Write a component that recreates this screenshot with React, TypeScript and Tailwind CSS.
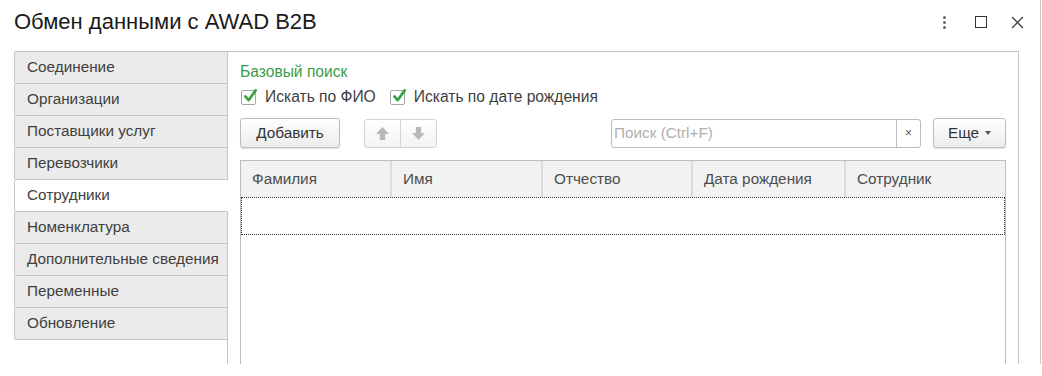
import React from "react";

const tabs = [
  "Соединение",
  "Организации",
  "Поставщики услуг",
  "Перевозчики",
  "Сотрудники",
  "Номенклатура",
  "Дополнительные сведения",
  "Переменные",
  "Обновление",
];

const columns = [
  { title: "Фамилия", w: "w-[151px]" },
  { title: "Имя", w: "w-[151px]" },
  { title: "Отчество", w: "w-[150px]" },
  { title: "Дата рождения", w: "w-[153px]" },
  { title: "Сотрудник", w: "flex-1" },
];

function Check({ label }: { label: string }) {
  return (
    <label className="flex items-center h-[20px]">
      <span className="relative w-[15px] h-[15px] border border-[#a6a6a6] rounded-[2px] bg-white">
        <svg viewBox="0 0 16 16" className="absolute left-[1px] -top-[3px] w-[15px] h-[16px]">
          <path d="M2.5 8.5 L6 12.5 L13.5 2" fill="none" stroke="#35a23f" strokeWidth="2.8" strokeLinecap="round" strokeLinejoin="round" />
        </svg>
      </span>
      <span className="ml-[9px] text-[15.6px] text-[#404040]">{label}</span>
    </label>
  );
}

function Arrow({ down }: { down?: boolean }) {
  return (
    <svg viewBox="0 0 14 14" className={"w-[15px] h-[15px] " + (down ? "rotate-180" : "")}>
      <path d="M7 1 L13 7.5 L9.5 7.5 L9.5 13 L4.5 13 L4.5 7.5 L1 7.5 Z" fill="#b8b8b8" />
    </svg>
  );
}

export default function App() {
  return (
    <div className="w-[1042px] h-[376px] bg-white font-['Liberation_Sans',Arial,sans-serif]">
      <div className="w-[1041px] h-[364px] border-r border-[#c8c8c8] flex flex-col">
        {/* header */}
        <div className="h-[51px] flex items-start justify-between pl-[14px] pt-[8px]">
          <h1 className="text-[22px] leading-[28px] text-[#1a1a1a]">Обмен данными с AWAD B2B</h1>
          <div className="flex items-center h-[28px] text-[#444]">
            <div className="flex flex-col gap-[2px] mr-[29px]">
              <span className="w-[3px] h-[3px] rounded-full bg-[#666]" />
              <span className="w-[3px] h-[3px] rounded-full bg-[#666]" />
              <span className="w-[3px] h-[3px] rounded-full bg-[#666]" />
            </div>
            <div className="w-[12px] h-[12px] border-[1.5px] border-[#333] mr-[24px]" />
            <svg viewBox="0 0 12 12" className="w-[13px] h-[13px] mr-[16px]">
              <path d="M1 1 L11 11 M11 1 L1 11" stroke="#444" strokeWidth="1.2" />
            </svg>
          </div>
        </div>

        {/* body */}
        <div className="flex flex-1 pl-[14px] pr-[21px]">
          <div className="w-[215px] flex flex-col">
            {tabs.map((t, i) => {
              const active = t === "Сотрудники";
              return (
                <div
                  key={t}
                  className={
                    "h-[32px] flex items-center pl-[12px] text-[15.3px] text-[#404040] border-l border-b border-[#c4c4c4] rounded-l-[2px] " +
                    (i === 0 ? "border-t h-[33px] " : "") +
                    (active ? "bg-white border-r border-r-white" : "bg-[#ebebeb] border-r")
                  }
                >
                  {t}
                </div>
              );
            })}
            <div className="flex-1 border-r border-[#c4c4c4]" />
          </div>

          <div className="flex-1 border-t border-r border-[#c4c4c4] flex flex-col pl-[12px] pr-[12px] pt-[11px]">
            <div className="text-[15.6px] leading-[18px] text-[#3b9c47]">Базовый поиск</div>
            <div className="flex items-center mt-[6px] gap-[14px] pl-[1px]">
              <Check label="Искать по ФИО" />
              <Check label="Искать по дате рождения" />
            </div>

            <div className="flex items-center mt-[11px] h-[30px]">
              <button className="w-[100px] h-[30px] border border-[#bcbcbc] rounded-[3px] bg-gradient-to-b from-white to-[#ececec] shadow-[0_1px_1px_rgba(0,0,0,0.12)] text-[15.3px] text-[#333]">
                Добавить
              </button>
              <div className="ml-[24px] flex h-[29px] border border-[#d4d4d4] rounded-[3px] bg-gradient-to-b from-white to-[#f3f3f3]">
                <div className="w-[36px] flex items-center justify-center border-r border-[#d4d4d4]">
                  <Arrow />
                </div>
                <div className="w-[35px] flex items-center justify-center">
                  <Arrow down />
                </div>
              </div>
              <div className="ml-[174px] flex h-[29px] w-[310px] border border-[#bcbcbc] rounded-[3px] bg-white">
                <div className="flex-1 flex items-center pl-[2px] text-[15.3px] text-[#b0b0b0]">Поиск (Ctrl+F)</div>
                <div className="w-[24px] flex items-center justify-center border-l border-[#bcbcbc] text-[12px] text-[#555]">×</div>
              </div>
              <button className="ml-[12px] w-[73px] h-[30px] border border-[#bcbcbc] rounded-[3px] bg-gradient-to-b from-white to-[#ececec] shadow-[0_1px_1px_rgba(0,0,0,0.12)] text-[15.3px] text-[#333] flex items-center justify-center gap-[6px]">
                Еще
                <span className="w-0 h-0 border-l-[3.5px] border-r-[3.5px] border-t-[4px] border-l-transparent border-r-transparent border-t-[#555]" />
              </button>
            </div>

            <div className="mt-[12px] flex-1 border-t border-l border-r border-[#bdbdbd] flex flex-col">
              <div className="flex h-[36px] bg-[#f2f2f2]">
                {columns.map((c, i) => (
                  <div
                    key={c.title}
                    className={
                      c.w +
                      " flex items-center pl-[11px] text-[15.3px] text-[#4d4d4d] " +
                      (i < columns.length - 1 ? "border-r-2 border-r-[#dcdcdc]" : "")
                    }
                  >
                    {c.title}
                  </div>
                ))}
              </div>
              <div className="h-[38px] border border-dotted border-[#333]" />
            </div>
          </div>
        </div>
      </div>
    </div>
  );
}
